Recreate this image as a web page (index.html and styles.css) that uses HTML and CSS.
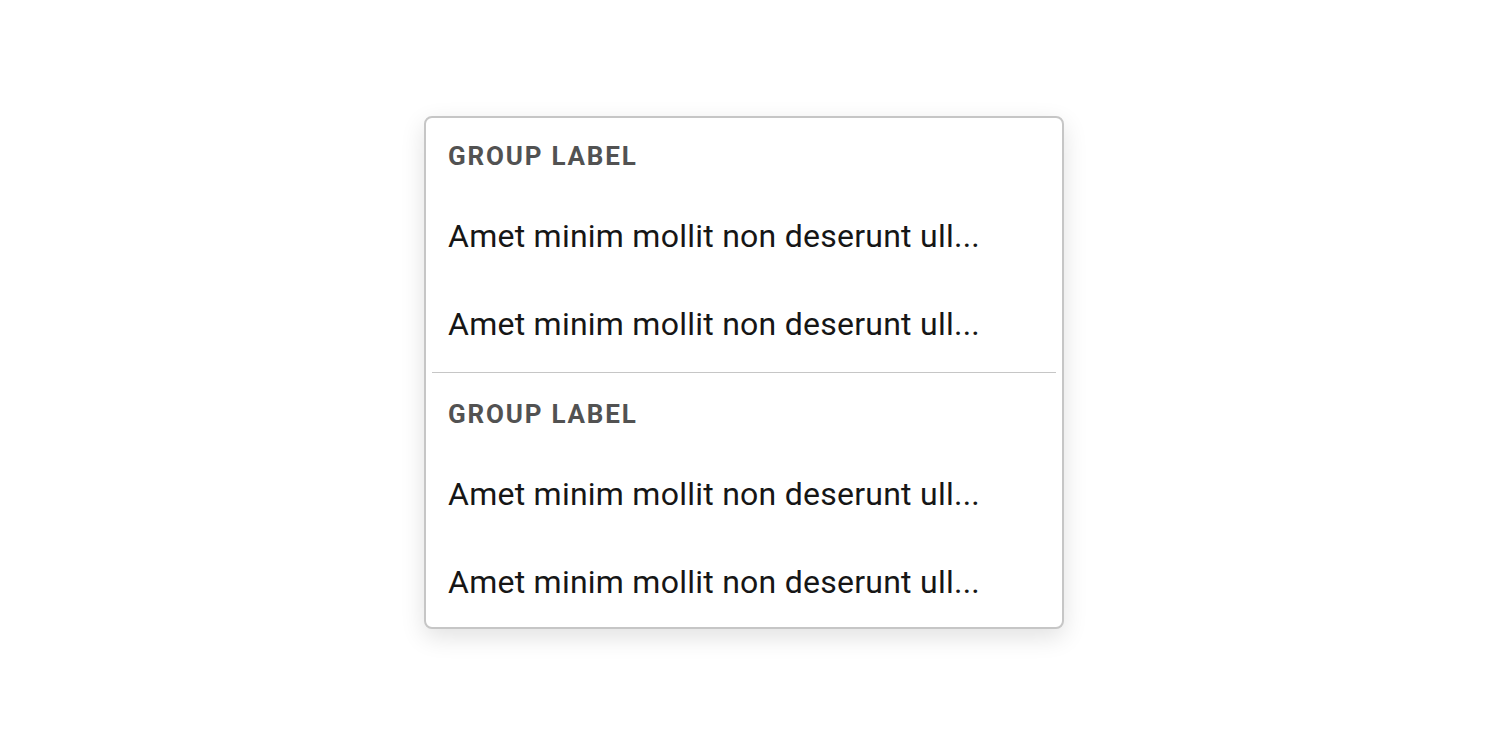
FILE: index.html
```html
<!DOCTYPE html>
<html lang="en">
<head>
    <meta charset="UTF-8">
    <meta name="viewport" content="width=device-width, initial-scale=1.0">
    <title>Menu Groups</title>
    <link rel="stylesheet" href="styles.css">
</head>
<body>
    <div class="menu">
        <div class="menu-group">
            <div class="group-label">GROUP LABEL</div>
            <div class="menu-item">Amet minim mollit non deserunt ull...</div>
            <div class="menu-item">Amet minim mollit non deserunt ull...</div>
        </div>
        <hr class="menu-divider">
        <div class="menu-group">
            <div class="group-label">GROUP LABEL</div>
            <div class="menu-item">Amet minim mollit non deserunt ull...</div>
            <div class="menu-item">Amet minim mollit non deserunt ull...</div>
        </div>
    </div>
</body>
</html>
```

FILE: styles.css
```css
/* General Styles */
body {
    font-family: 'Roboto', 'Liberation Sans', sans-serif;
    background-color: #ffffff;
    margin: 0;
    padding: 0;
    display: flex;
    justify-content: center;
    align-items: center;
    min-height: 100vh;
}

/* Menu card */
.menu {
    box-sizing: border-box;
    width: 640px;
    padding: 4px 6px 1px;
    background: #ffffff;
    border: 2px solid #c6c6c6;
    border-radius: 8px;
    box-shadow: 0 8px 24px rgba(0, 0, 0, 0.12);
}

.group-label {
    height: 70px;
    display: flex;
    align-items: center;
    padding: 0 16px 2px;
    box-sizing: border-box;
    font-size: 26px;
    font-weight: bold;
    letter-spacing: 1.8px;
    color: #525252;
}

.menu-item {
    height: 88px;
    display: flex;
    align-items: center;
    padding: 0 16px;
    font-size: 32px;
    letter-spacing: 0.25px;
    color: #161616;
    white-space: nowrap;
}

.menu-divider {
    border: none;
    height: 1px;
    background: #c6c6c6;
    margin: 4px 0 7px;
}
```
